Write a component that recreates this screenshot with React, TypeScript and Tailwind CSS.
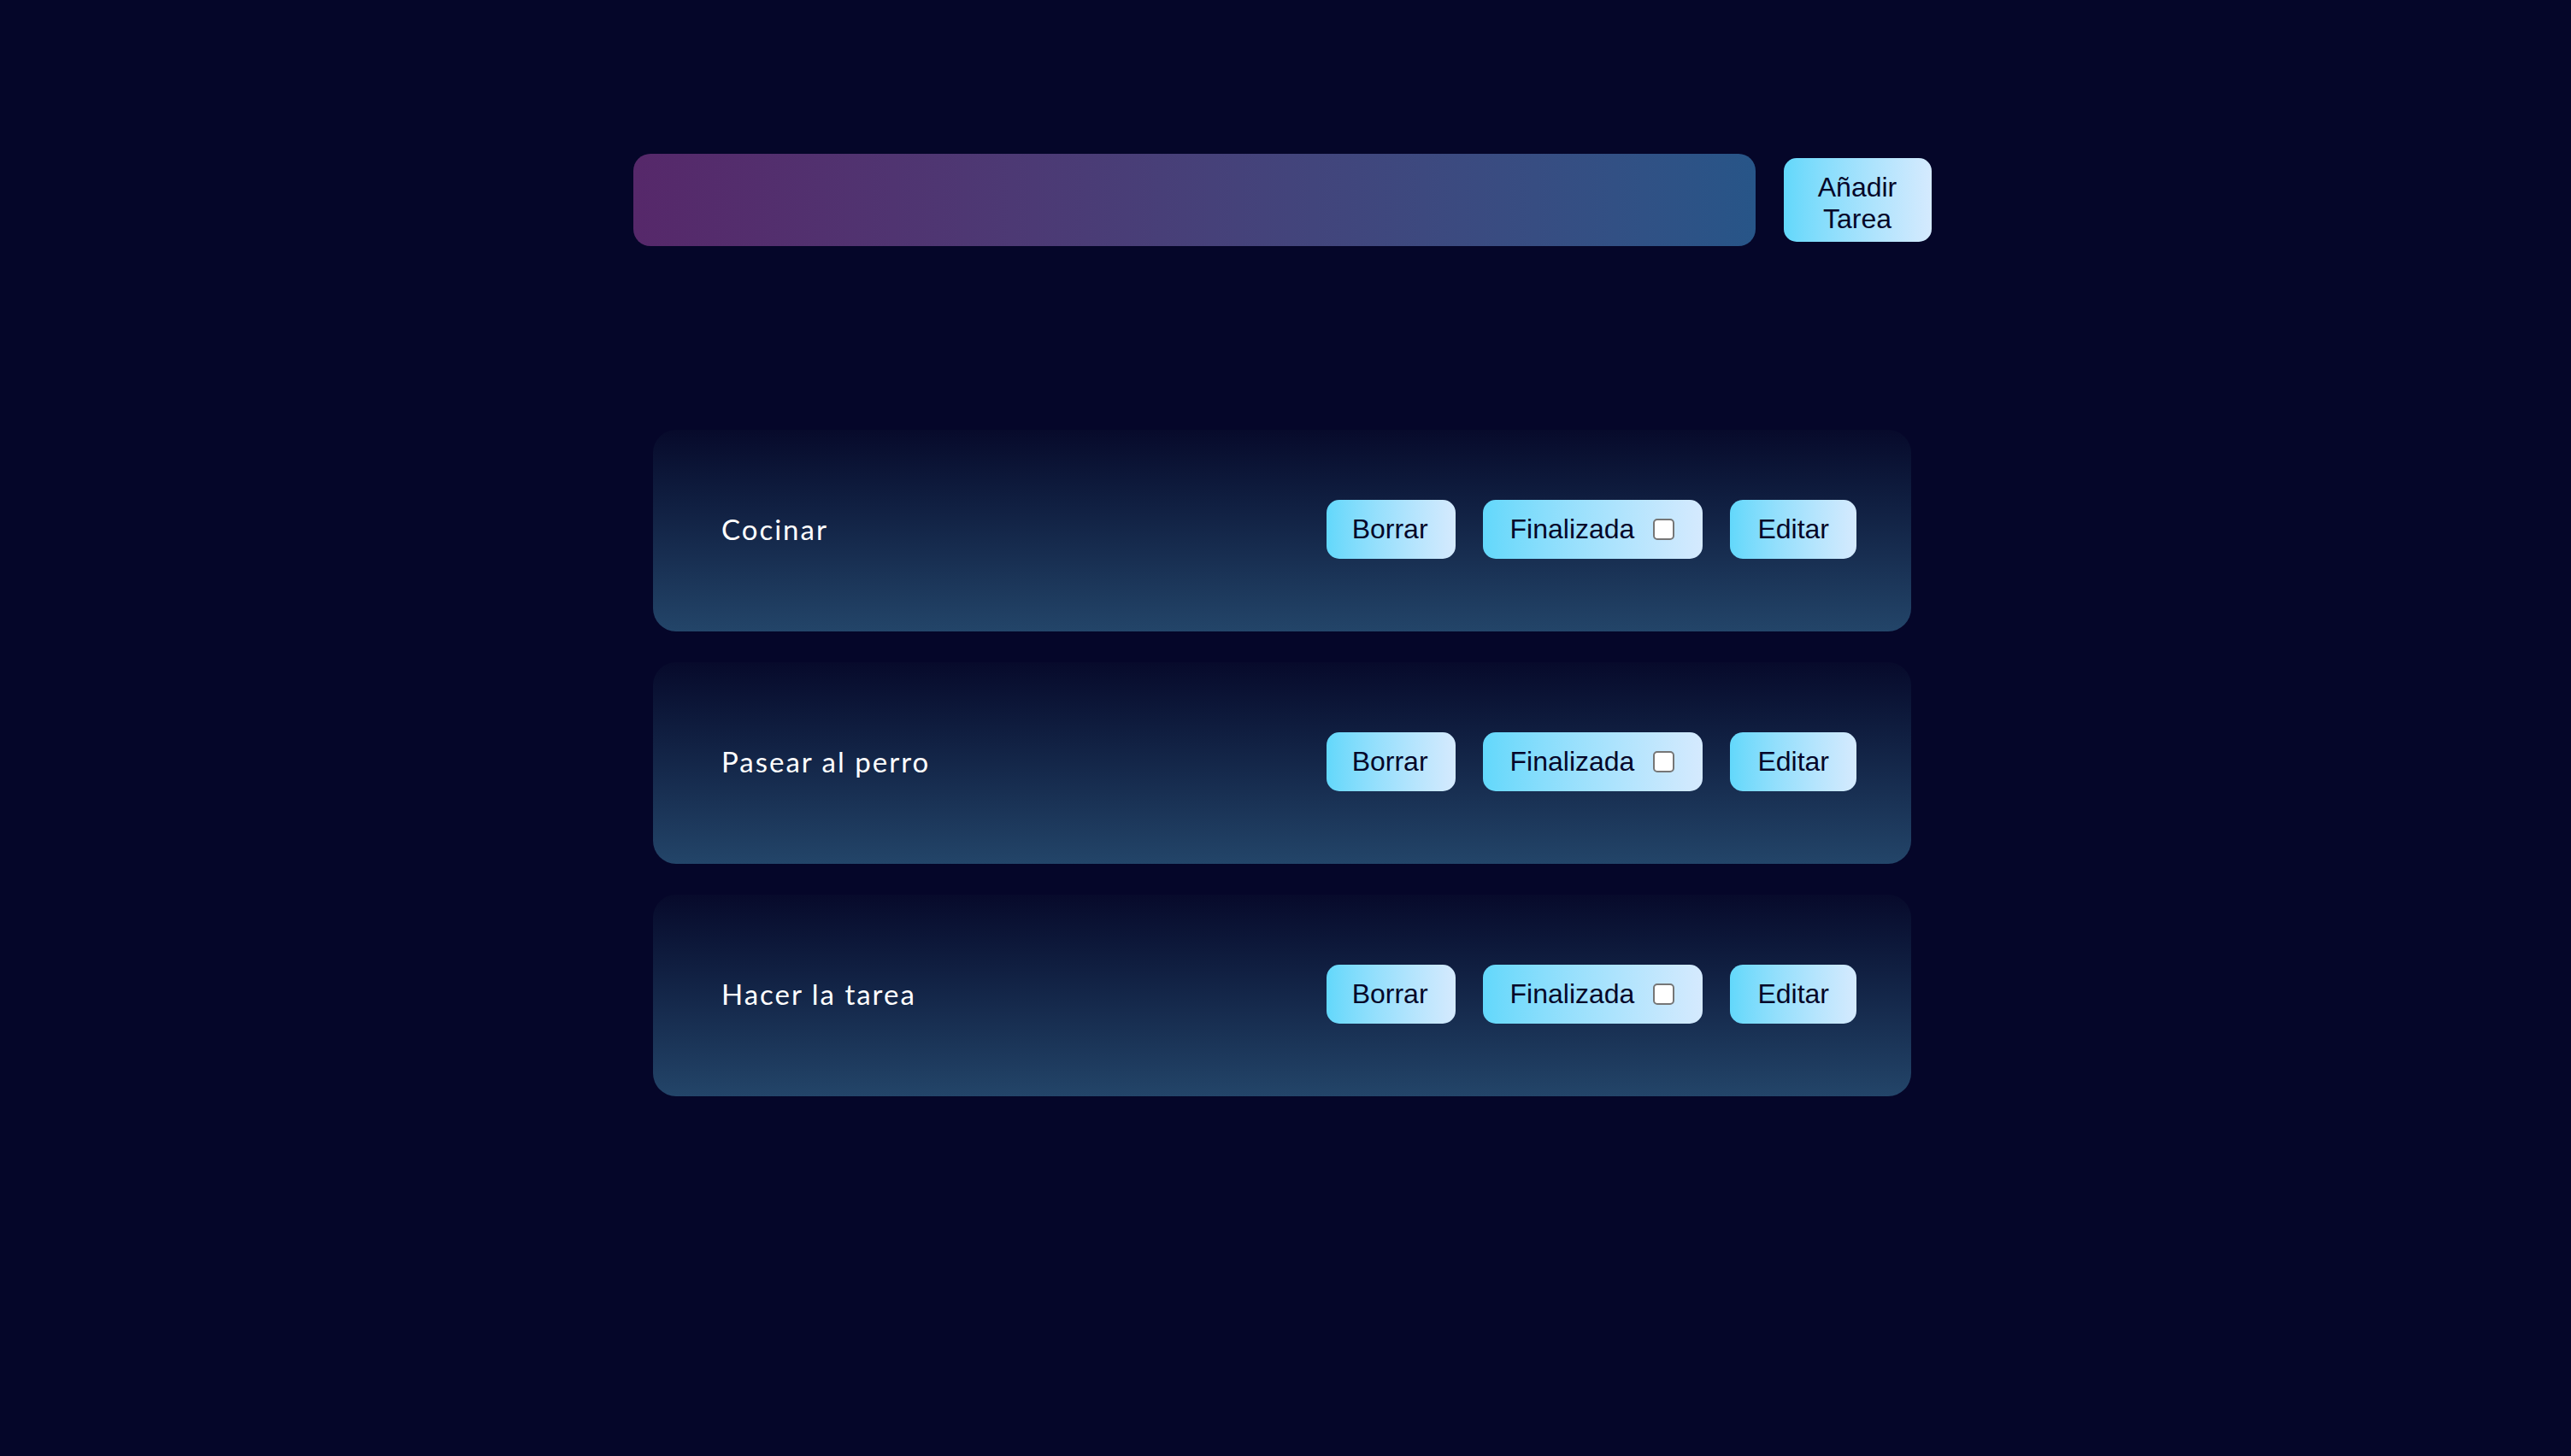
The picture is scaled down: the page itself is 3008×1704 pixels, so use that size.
import React, { useState } from 'react';

interface Task {
  id: number;
  title: string;
  done: boolean;
}

const initialTasks: Task[] = [
  { id: 1, title: 'Cocinar', done: false },
  { id: 2, title: 'Pasear al perro', done: false },
  { id: 3, title: 'Hacer la tarea', done: false },
];

const btn =
  'bg-linear-to-r from-[#62d8fb] to-[#d5eafe] text-[#050629] rounded-[15px] text-[32px] leading-[1.15]';

const TaskCard: React.FC<{ task: Task; onToggle: () => void; onDelete: () => void }> = ({
  task,
  onToggle,
  onDelete,
}) => (
  <div className="h-[236px] rounded-[27px] bg-linear-to-b from-[#070a2b] to-[#234569] flex items-center justify-between pl-[80px] pr-[64px]">
    <span className="text-white text-[33px] font-['Lato',sans-serif] tracking-[2px] pb-[2px]">{task.title}</span>
    <div className="flex items-center gap-[32px] font-['Liberation_Sans',Arial,sans-serif] -mt-[3px]">
      <button onClick={onDelete} className={`${btn} pl-[30px] pr-[32px] py-[16px]`}>
        Borrar
      </button>
      <button onClick={onToggle} className={`${btn} pl-[32px] pr-[33px] py-[16px] flex items-center gap-[22px]`}>
        <span>Finalizada</span>
        <span className="w-[25px] h-[25px] rounded-[5px] bg-white border-2 border-[#767676] flex items-center justify-center">
          {task.done && <span className="w-[11px] h-[11px] bg-[#0a66d8] rounded-[2px]" />}
        </span>
      </button>
      <button className={`${btn} px-[32px] py-[16px]`}>Editar</button>
    </div>
  </div>
);

export default function App() {
  const [tasks, setTasks] = useState<Task[]>(initialTasks);
  const [text, setText] = useState('');

  const add = () => {
    if (!text.trim()) return;
    setTasks([...tasks, { id: Date.now(), title: text.trim(), done: false }]);
    setText('');
  };

  return (
    <div className="min-h-screen bg-[#050629] pt-[180px] pr-[8px]">
      {/* Form */}
      <div className="w-[1519px] mx-auto flex items-center gap-[33px] font-['Liberation_Sans',Arial,sans-serif]">
        <input
          value={text}
          onChange={(e) => setText(e.target.value)}
          className="flex-1 h-[108px] rounded-[20px] bg-linear-to-r from-[#56286a] to-[#275588] outline-none px-[24px] text-[32px] text-white"
        />
        <button onClick={add} className={`${btn} w-[173px] pt-[16px] pb-[8px] text-center`}>
          Añadir Tarea
        </button>
      </div>

      {/* Task list */}
      <div className="w-[1472px] mx-auto mt-[215px] flex flex-col gap-[36px]">
        {tasks.map((t) => (
          <TaskCard
            key={t.id}
            task={t}
            onToggle={() => setTasks(tasks.map((x) => (x.id === t.id ? { ...x, done: !x.done } : x)))}
            onDelete={() => setTasks(tasks.filter((x) => x.id !== t.id))}
          />
        ))}
      </div>
    </div>
  );
}
